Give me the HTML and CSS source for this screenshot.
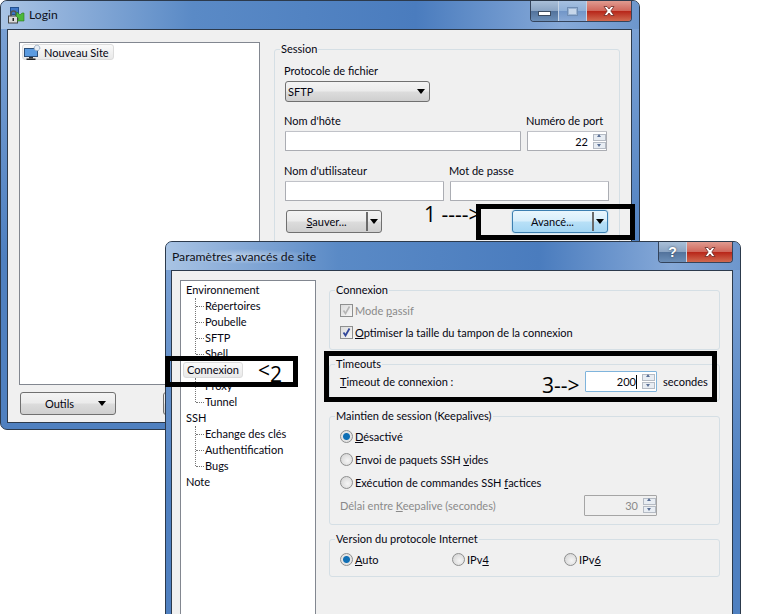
FILE: index.html
```html
<!DOCTYPE html>
<html lang="fr">
<head>
    <meta charset="UTF-8">
    <title>Login</title>
    <link rel="stylesheet" href="styles.css">
</head>
<body>
<div class="desktop">

    <!-- fenetre Login -->
    <div class="window login-window">
        <div class="titlebar">
            <svg class="app-icon" width="17" height="17" viewBox="0 0 17 17">
                <rect x="2.500" y="0.500" width="8" height="7" fill="#3f78c8" stroke="#22508f"/>
                <path d="M3 9V6.500a2.500 2.500 0 0 1 5 0V9" fill="none" stroke="#555" stroke-width="1.500"/>
                <rect x="0.500" y="9" width="9" height="7" fill="#d9d9d9" stroke="#444"/>
                <rect x="4.500" y="11" width="1.500" height="3" fill="#222"/>
                <path d="M9 5l3 3 2-2 2 0v8h-7l2-2-3-3z" fill="#4cb83a" stroke="#2b7a20" stroke-width="0.600"/>
            </svg>
            <span class="title">Login</span>
            <div class="caption-btns">
                <div class="cap-btn cap-min"><span class="min-glyph"></span></div>
                <div class="cap-btn cap-max"><span class="max-glyph"></span></div>
                <div class="cap-btn cap-close">
                    <svg width="16" height="12" viewBox="0 0 16 12"><path d="M3 1.500h3l2 2.500 2-2.500h3L9.800 6 13 10.500h-3L8 8l-2 2.500H3L6.200 6z" fill="#fff" stroke="#6b2a24" stroke-width="0.800"/></svg>
                </div>
            </div>
        </div>
        <div class="client login-client">
            <div class="left-col">
                <div class="tree login-tree">
                    <div class="site-item">
                        <svg width="17" height="17" viewBox="0 0 17 17">
                            <rect x="0.500" y="4.500" width="13" height="8" fill="#5b9be0" stroke="#2b4f7a"/>
                            <rect x="5" y="13" width="4" height="1.500" fill="#333"/>
                            <rect x="2.500" y="14.500" width="9" height="1.500" fill="#222"/>
                            <circle cx="13" cy="4" r="2.800" fill="#e8eef5" stroke="#8aa0b8" stroke-dasharray="1.500 0.700"/>
                        </svg>
                        <span>Nouveau Site</span>
                    </div>
                </div>
                <div class="left-buttons">
                    <div class="btn outils-btn"><span class="btn-text">Outils</span><span class="arrow"></span></div>
                    <div class="btn stub-btn"></div>
                </div>
            </div>
            <fieldset class="group session">
                <legend>Session</legend>
                <div class="field">
                    <label>Protocole de fichier</label>
                    <div class="btn select"><span>SFTP</span><span class="arrow"></span></div>
                </div>
                <div class="field-row row-host">
                    <div class="field host"><label>Nom d'hôte</label><div class="input"></div></div>
                    <div class="field port">
                        <label>Numéro de port</label>
                        <div class="input spin-input"><span>22</span><div class="spin"><i class="up"></i><i class="down"></i></div></div>
                    </div>
                </div>
                <div class="field-row row-user">
                    <div class="field user"><label>Nom d'utilisateur</label><div class="input"></div></div>
                    <div class="field user"><label>Mot de passe</label><div class="input"></div></div>
                </div>
                <div class="session-buttons">
                    <div class="btn split"><span class="btn-text"><u>S</u>auver...</span><span class="sep"></span><span class="arrow"></span></div>
                    <div class="btn split focused"><span class="btn-text">Avancé...</span><span class="sep"></span><span class="arrow"></span></div>
                </div>
            </fieldset>
        </div>
    </div>

    <!-- fenetre Parametres avances -->
    <div class="window adv-window">
        <div class="titlebar">
            <span class="title adv-title">Paramètres avancés de site</span>
            <div class="caption-btns">
                <div class="cap-btn cap-help">?</div>
                <div class="cap-btn cap-close">
                    <svg width="16" height="12" viewBox="0 0 16 12"><path d="M3 1.500h3l2 2.500 2-2.500h3L9.800 6 13 10.500h-3L8 8l-2 2.500H3L6.200 6z" fill="#fff" stroke="#6b2a24" stroke-width="0.800"/></svg>
                </div>
            </div>
        </div>
        <div class="client adv-client">
            <div class="tree adv-tree">
                <div class="node">Environnement</div>
                <div class="branch">
                    <div class="node">Répertoires</div>
                    <div class="node">Poubelle</div>
                    <div class="node">SFTP</div>
                    <div class="node">Shell</div>
                </div>
                <div class="node root-selected"><span class="selected">Connexion</span></div>
                <div class="branch">
                    <div class="node">Proxy</div>
                    <div class="node">Tunnel</div>
                </div>
                <div class="node">SSH</div>
                <div class="branch">
                    <div class="node">Echange des clés</div>
                    <div class="node">Authentification</div>
                    <div class="node">Bugs</div>
                </div>
                <div class="node">Note</div>
            </div>
            <div class="panels">
                <fieldset class="group conn-group">
                    <legend>Connexion</legend>
                    <div class="check-row disabled"><span class="check"><svg width="11" height="11" viewBox="0 0 11 11"><path d="M2.500 5.500l2 3 4-7" fill="none" stroke="#b5b5b5" stroke-width="1.600"/></svg></span><span>Mode <u>p</u>assif</span></div>
                    <div class="check-row"><span class="check"><svg width="11" height="11" viewBox="0 0 11 11"><path d="M2.500 5.500l2 3 4-7" fill="none" stroke="#33489a" stroke-width="1.800"/></svg></span><span><u>O</u>ptimiser la taille du tampon de la connexion</span></div>
                </fieldset>
                <fieldset class="group timeout-group">
                    <legend>Timeouts</legend>
                    <div class="timeout-row">
                        <span class="timeout-label"><u>T</u>imeout de connexion :</span>
                        <div class="input spin-input focus-input"><span>200</span><b class="caret"></b><div class="spin"><i class="up"></i><i class="down"></i></div></div>
                        <span class="unit">secondes</span>
                    </div>
                </fieldset>
                <fieldset class="group keep-group">
                    <legend>Maintien de session (Keepalives)</legend>
                    <div class="radio-row"><span class="radio on"></span><span><u>D</u>ésactivé</span></div>
                    <div class="radio-row"><span class="radio"></span><span>Envoi de paquets SSH <u>v</u>ides</span></div>
                    <div class="radio-row"><span class="radio"></span><span>Exécution de commandes SSH <u>f</u>actices</span></div>
                    <div class="delay-row">
                        <span class="disabled">Délai entre <u>K</u>eepalive (secondes)</span>
                        <div class="input spin-input off-input"><span>30</span><div class="spin"><i class="up"></i><i class="down"></i></div></div>
                    </div>
                </fieldset>
                <fieldset class="group ip-group">
                    <legend>Version du protocole Internet</legend>
                    <div class="ip-row">
                        <div class="radio-row"><span class="radio on"></span><span><u>A</u>uto</span></div>
                        <div class="radio-row"><span class="radio"></span><span>IPv<u>4</u></span></div>
                        <div class="radio-row"><span class="radio"></span><span>IPv<u>6</u></span></div>
                    </div>
                </fieldset>
            </div>
        </div>
    </div>

    <!-- annotations -->
    <div class="mark mark-1"></div>
    <div class="mark mark-2"></div>
    <div class="mark mark-3"></div>
    <span class="note note-1">1 ----&gt;</span>
    <span class="note note-2a">&lt;</span>
    <span class="note note-2b">2</span>
    <span class="note note-3">3--&gt;</span>
</div>
</body>
</html>
```

FILE: styles.css
```css
html, body {
    margin: 0;
    padding: 0;
    background: #fff;
}
.desktop {
    position: relative;
    width: 768px;
    height: 614px;
    overflow: hidden;
    font-family: Lato, "Open Sans", Arial, sans-serif;
    font-size: 11px;
    color: #050510;
}
.window {
    position: absolute;
    box-sizing: border-box;
    border: 1px solid #2c3a4c;
    border-radius: 7px 7px 0 0;
    padding: 0 7px 7px 6px;
    background: linear-gradient(180deg, #7ea4d6 0%, #4f80c0 60%, #4f80c0 100%);
}
.login-window {
    left: 0;
    top: 0;
    width: 640px;
    height: 430px;
    border-radius: 7px;
}
.adv-window {
    left: 165px;
    top: 241px;
    width: 576px;
    height: 420px;
    padding-left: 5px;
}
.titlebar {
    display: flex;
    align-items: flex-start;
    height: 28px;
    margin: 0 -7px 0 -6px;
    padding: 0 7px 0 7px;
    background: linear-gradient(90deg, #a9c4e4 0%, #8fb0da 10%, #5a8ac6 30%, #4a7cbe 65%, #86a9d8 88%, #6d96cc 100%);
    border-radius: 6px 6px 0 0;
}
.adv-window .titlebar {
    margin-left: -5px;
    padding-left: 6px;
}
.app-icon {
    margin: 6px 4px 0 0;
}
.title {
    font-size: 12.200px;
    margin-top: 6px;
    color: #10121a;
}
.adv-title {
    margin-top: 7px;
    background: radial-gradient(closest-side, rgba(220, 232, 245, .6), rgba(220, 232, 245, 0));
}
.caption-btns {
    display: flex;
    margin-left: auto;
    height: 20px;
    border: 1px solid #34445c;
    border-top: none;
    border-radius: 0 0 4px 4px;
    overflow: hidden;
}
.cap-btn {
    box-sizing: border-box;
    display: flex;
    align-items: center;
    justify-content: center;
    width: 28px;
    background: linear-gradient(180deg, #a9bfd8 0%, #8ba5c4 48%, #53739c 52%, #6c8fb8 100%);
    border-right: 1px solid #c4d3e4;
}
.cap-max {
    background: linear-gradient(180deg, #a6c0e0 0%, #8fb0d8 48%, #7296c8 52%, #8aaad6 100%);
}
.min-glyph {
    width: 11px;
    height: 3px;
    margin-top: 5px;
    background: #fff;
    border: 1px solid #3c4c60;
}
.max-glyph {
    width: 9px;
    height: 7px;
    border: 1px solid #6f8db4;
    background: #c6d6ea;
    box-shadow: inset 0 0 0 1px #9ab3d2;
}
.cap-close {
    width: 44px;
    border-right: none;
    background: linear-gradient(180deg, #e09b90 0%, #d0685c 48%, #b8271a 52%, #d06a50 100%);
}
.adv-window .cap-close {
    width: 45px;
}
.cap-help {
    font: bold 14px "Liberation Sans", Arial, sans-serif;
    color: #fff;
    text-shadow: 0 0 2px #2c3a4c;
}
.client {
    box-sizing: border-box;
    border: 1px solid #2c3a4c;
    background: #f0f0f0;
    display: flex;
}
.login-client {
    height: 394px;
    padding: 12px 0 0 11px;
    gap: 14px;
}
.adv-client {
    height: 400px;
    padding: 9px 0 0 8px;
    gap: 13px;
}
.tree {
    box-sizing: border-box;
    background: #fff;
    border: 1px solid #828790;
}
.login-tree {
    width: 241px;
    height: 343px;
    padding: 1px 2px;
}
.site-item {
    box-sizing: border-box;
    display: inline-flex;
    align-items: center;
    gap: 3px;
    height: 16px;
    padding: 0 4px 0 1px;
    border: 1px solid #dcdcdc;
    border-radius: 3px;
    background: linear-gradient(180deg, #fafafa, #e9e9e9);
}
.left-buttons {
    display: flex;
    gap: 47px;
    margin: 7px 0 0 1px;
}
.btn {
    box-sizing: border-box;
    display: flex;
    align-items: center;
    height: 23px;
    border: 1px solid #707070;
    border-radius: 3px;
    background: linear-gradient(180deg, #f3f3f3 0%, #ebebeb 48%, #dcdcdc 52%, #cfcfcf 100%);
}
.outils-btn {
    width: 96px;
    padding-right: 9px;
}
.btn-text {
    flex: 1;
    text-align: center;
}
.stub-btn {
    width: 60px;
}
.arrow {
    width: 0;
    height: 0;
    border: 4.500px solid transparent;
    border-top: 5px solid #000;
    border-bottom: none;
}
.group {
    box-sizing: border-box;
    margin: 0;
    border: 1px solid #d5dfe5;
    border-radius: 3px;
    min-width: 0;
}
.group legend {
    padding: 0 1px;
    margin-left: -5px;
    line-height: 14px;
}
.session {
    width: 346px;
    height: 340px;
    padding: 8px 10px 0;
}
.field {
    display: flex;
    flex-direction: column;
}
.field label {
    line-height: 14px;
    margin: 0 0 3px -1px;
    white-space: nowrap;
}
.select {
    width: 145px;
    height: 21px;
    padding: 0 4px 0 2px;
    justify-content: space-between;
}
.input {
    box-sizing: border-box;
    height: 20px;
    background: #fff;
    border: 1px solid #abadb3;
    border-top-color: #c0c2c8;
    border-radius: 1px;
}
.field-row {
    display: flex;
}
.row-host {
    margin-top: 12px;
    gap: 6px;
}
.host {
    width: 236px;
}
.port {
    width: 80px;
}
.row-user {
    margin-top: 13px;
    gap: 6px;
}
.user {
    width: 159px;
}
.spin-input {
    display: flex;
    align-items: center;
    justify-content: flex-end;
}
.spin {
    display: flex;
    flex-direction: column;
    gap: 1px;
    margin-left: 5px;
}
.spin i {
    position: relative;
    display: block;
    width: 13px;
    height: 7px;
    box-sizing: border-box;
    border: 1px solid #b5bbc4;
    background: #e8edf3;
}
.spin i::after {
    content: "";
    position: absolute;
    left: 3px;
    width: 0;
    height: 0;
    border: 2.500px solid transparent;
}
.spin .up::after {
    top: -1px;
    border-top: none;
    border-bottom: 3px solid #5a6f95;
}
.spin .down::after {
    top: 1px;
    border-bottom: none;
    border-top: 3px solid #5a6f95;
}
.session-buttons {
    display: flex;
    justify-content: space-between;
    width: 322px;
    margin: 9px 0 0 1px;
}
.split {
    width: 96px;
    padding-right: 3px;
}
.sep {
    width: 2px;
    height: 19px;
    margin-right: 2px;
    background: #6a6a6a;
}
.focused {
    border-color: #3c7fb1;
    background: linear-gradient(180deg, #e9f6fd 0%, #d7eefb 48%, #b8e0f7 52%, #a4d6f3 100%);
    box-shadow: 0 0 2px #7cc4ea;
}
.adv-tree {
    width: 136px;
    height: 380px;
    padding: 1px 0 0 5px;
}
.node {
    position: relative;
    line-height: 16px;
    height: 16px;
}
.branch {
    margin-left: 8px;
    padding-left: 11px;
    position: relative;
}
.branch .node::before {
    content: "";
    position: absolute;
    left: -9px;
    top: 8px;
    width: 8px;
    border-top: 1px dotted #777;
}
.branch::before {
    content: "";
    position: absolute;
    left: 1px;
    top: 0;
    bottom: 8px;
    border-left: 1px dotted #777;
}
.selected {
    display: inline-block;
    box-sizing: border-box;
    margin-left: -3px;
    padding: 0 3px;
    height: 16px;
    line-height: 14px;
    border: 1px solid #dcdcdc;
    border-radius: 3px;
    background: linear-gradient(180deg, #fafafa, #e9e9e9);
}
.panels {
    display: flex;
    flex-direction: column;
    width: 391px;
    padding-top: 3px;
}
.disabled {
    color: #8a8a8a;
}
.conn-group {
    height: 67px;
    padding: 2px 0 0 10px;
}
.timeout-group {
    height: 44px;
    margin-top: 7px;
    padding: 0 0 0 10px;
}
.keep-group {
    height: 116px;
    margin-top: 8px;
    padding: 2px 0 0 10px;
}
.ip-group {
    height: 45px;
    margin-top: 7px;
    padding: 2px 0 0 10px;
}
.check-row {
    display: flex;
    align-items: center;
    height: 22px;
}
.check {
    box-sizing: border-box;
    display: flex;
    align-items: center;
    justify-content: center;
    width: 13px;
    height: 13px;
    margin-right: 2px;
    border: 1px solid #8e8f8f;
    background: linear-gradient(135deg, #dcdcdc, #f6f6f6);
}
.timeout-row {
    display: flex;
    align-items: center;
}
.timeout-label {
    width: 245px;
}
.focus-input {
    width: 72px;
    height: 21px;
    border-color: #7fb4dc;
    padding-right: 1px;
}
.caret {
    width: 1px;
    height: 14px;
    background: #000;
}
.unit {
    margin-left: 6px;
}
.radio-row {
    display: flex;
    align-items: center;
    height: 23px;
}
.radio {
    box-sizing: border-box;
    width: 13px;
    height: 13px;
    margin-right: 2px;
    border: 1px solid #8e8f8f;
    border-radius: 50%;
    background: radial-gradient(circle at 60% 60%, #f5f5f5, #cfcfcf);
}
.radio.on {
    background: radial-gradient(circle, #0f6fb5 0 3px, #e4e4e4 4px);
}
.delay-row {
    display: flex;
    align-items: center;
    justify-content: space-between;
    width: 317px;
    height: 23px;
    color: #8a8a8a;
}
.off-input {
    width: 73px;
    height: 21px;
    background: #f0f0f0;
    border-color: #a5a5a5;
}
.ip-row {
    display: flex;
}
.ip-row .radio-row {
    width: 112px;
}
.mark {
    position: absolute;
    box-sizing: border-box;
    border: 5px solid #000;
}
.mark-1 {
    left: 476px;
    top: 204px;
    width: 159px;
    height: 36px;
}
.mark-2 {
    left: 165px;
    top: 356px;
    width: 133px;
    height: 31px;
}
.mark-3 {
    left: 324px;
    top: 351px;
    width: 393px;
    height: 51px;
}
.note {
    position: absolute;
    color: #000;
    font-family: "Open Sans", Arial, sans-serif;
    font-size: 21px;
    line-height: 24px;
    white-space: nowrap;
}
.note-1 {
    left: 424px;
    top: 202px;
}
.note-2a {
    left: 258px;
    top: 358px;
}
.note-2b {
    left: 270px;
    top: 362px;
}
.note-3 {
    left: 542px;
    top: 373px;
}
```
